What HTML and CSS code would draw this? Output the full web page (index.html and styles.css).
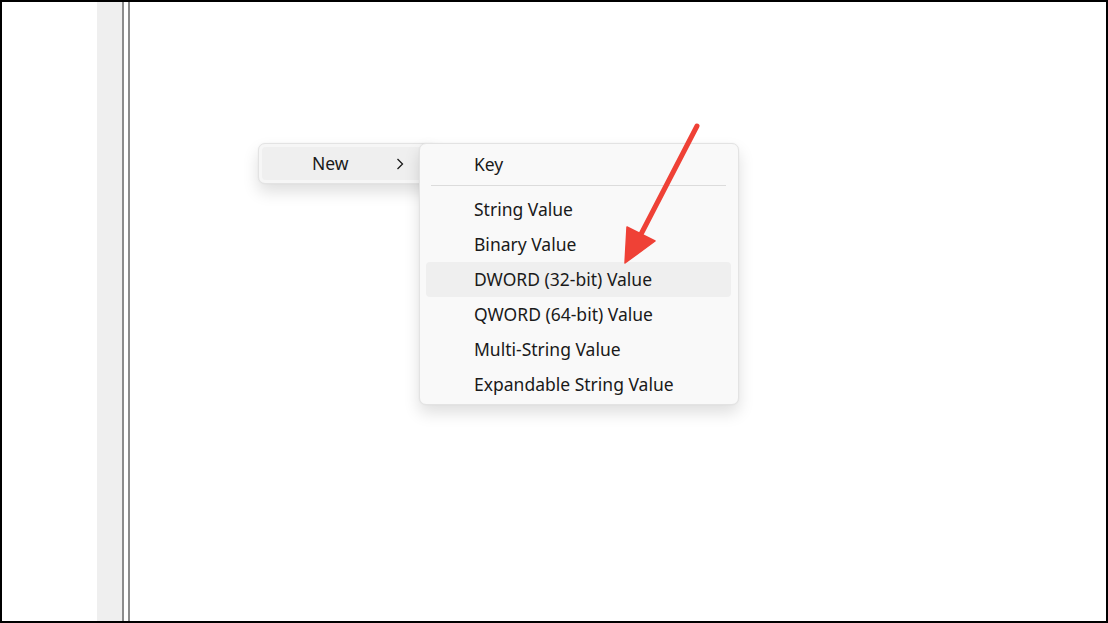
FILE: index.html
```html
<!DOCTYPE html>
<html>
<head>
<meta charset="utf-8">
<link rel="stylesheet" href="styles.css">
</head>
<body>
<div class="frame">
  <div class="gutter"></div>
  <div class="pane"></div>
  <div class="splitter"></div>
  <div class="content">
    <div class="menu parent-menu">
      <div class="item hover">
        <span class="label">New</span>
        <svg class="chev" width="8" height="12" viewBox="0 0 8 12"><path d="M1.5 1 L6.5 6 L1.5 11" fill="none" stroke="#1a1a1a" stroke-width="1.3"/></svg>
      </div>
    </div>
    <div class="menu sub-menu">
      <div class="item">Key</div>
      <div class="sep"></div>
      <div class="item">String Value</div>
      <div class="item">Binary Value</div>
      <div class="item hover">DWORD (32-bit) Value</div>
      <div class="item">QWORD (64-bit) Value</div>
      <div class="item">Multi-String Value</div>
      <div class="item">Expandable String Value</div>
    </div>
    <svg class="arrow" width="1108" height="623" viewBox="0 0 1108 623">
      <line x1="697" y1="126" x2="638" y2="240" stroke="#ef4136" stroke-width="5" stroke-linecap="round"/>
      <polygon points="625,263 627,227 655,241" fill="#ef4136" stroke="#ef4136" stroke-width="1.5" stroke-linejoin="round"/>
    </svg>
  </div>
</div>
</body>
</html>
```
FILE: styles.css
```css
html, body {
  margin: 0;
  padding: 0;
  background: #ffffff;
}
.frame {
  width: 1108px;
  height: 623px;
  box-sizing: border-box;
  border: 2px solid #000;
  display: flex;
  background: #fff;
  position: relative;
  overflow: hidden;
  font-family: "Noto Sans", "Open Sans", sans-serif;
  color: #1a1a1a;
}
.gutter {
  width: 95px;
  flex: none;
  background: #fff;
}
.pane {
  width: 25px;
  flex: none;
  background: #efefef;
}
.splitter {
  width: 4px;
  flex: none;
  border-left: 2px solid #8c8c8c;
  border-right: 2px solid #8c8c8c;
  background: #fff;
}
.content {
  flex: 1;
  background: #fff;
}
.menu {
  position: absolute;
  box-sizing: border-box;
  border: 1px solid #e3e3e3;
  border-radius: 7px;
  background: #f9f9f9;
  box-shadow: 0 8px 16px rgba(0, 0, 0, 0.13), 0 0 2px rgba(0, 0, 0, 0.05);
}
.parent-menu {
  left: 256px;
  top: 141px;
  width: 180px;
  height: 41px;
  padding: 3px;
  background: #f6f6f6;
}
.parent-menu .item {
  height: 33px;
  border-radius: 4px;
  display: flex;
  align-items: center;
  padding-left: 50px;
  padding-right: 0;
}
.parent-menu .label {
  width: 84px;
}
.chev {
  display: block;
}
.sub-menu {
  left: 417px;
  top: 141px;
  width: 320px;
  height: 262px;
  padding: 3px 7px 5px 6px;
}
.item {
  height: 35px;
  line-height: 35px;
  font-size: 17.5px;
  padding-left: 48px;
  border-radius: 4px;
  white-space: nowrap;
}
.item.hover {
  background: #efefef;
}
.sep {
  height: 1px;
  background: #dcdcdc;
  margin: 3px 5px 6px 5px;
}
.arrow {
  position: absolute;
  left: -2px;
  top: -2px;
  pointer-events: none;
}
```
